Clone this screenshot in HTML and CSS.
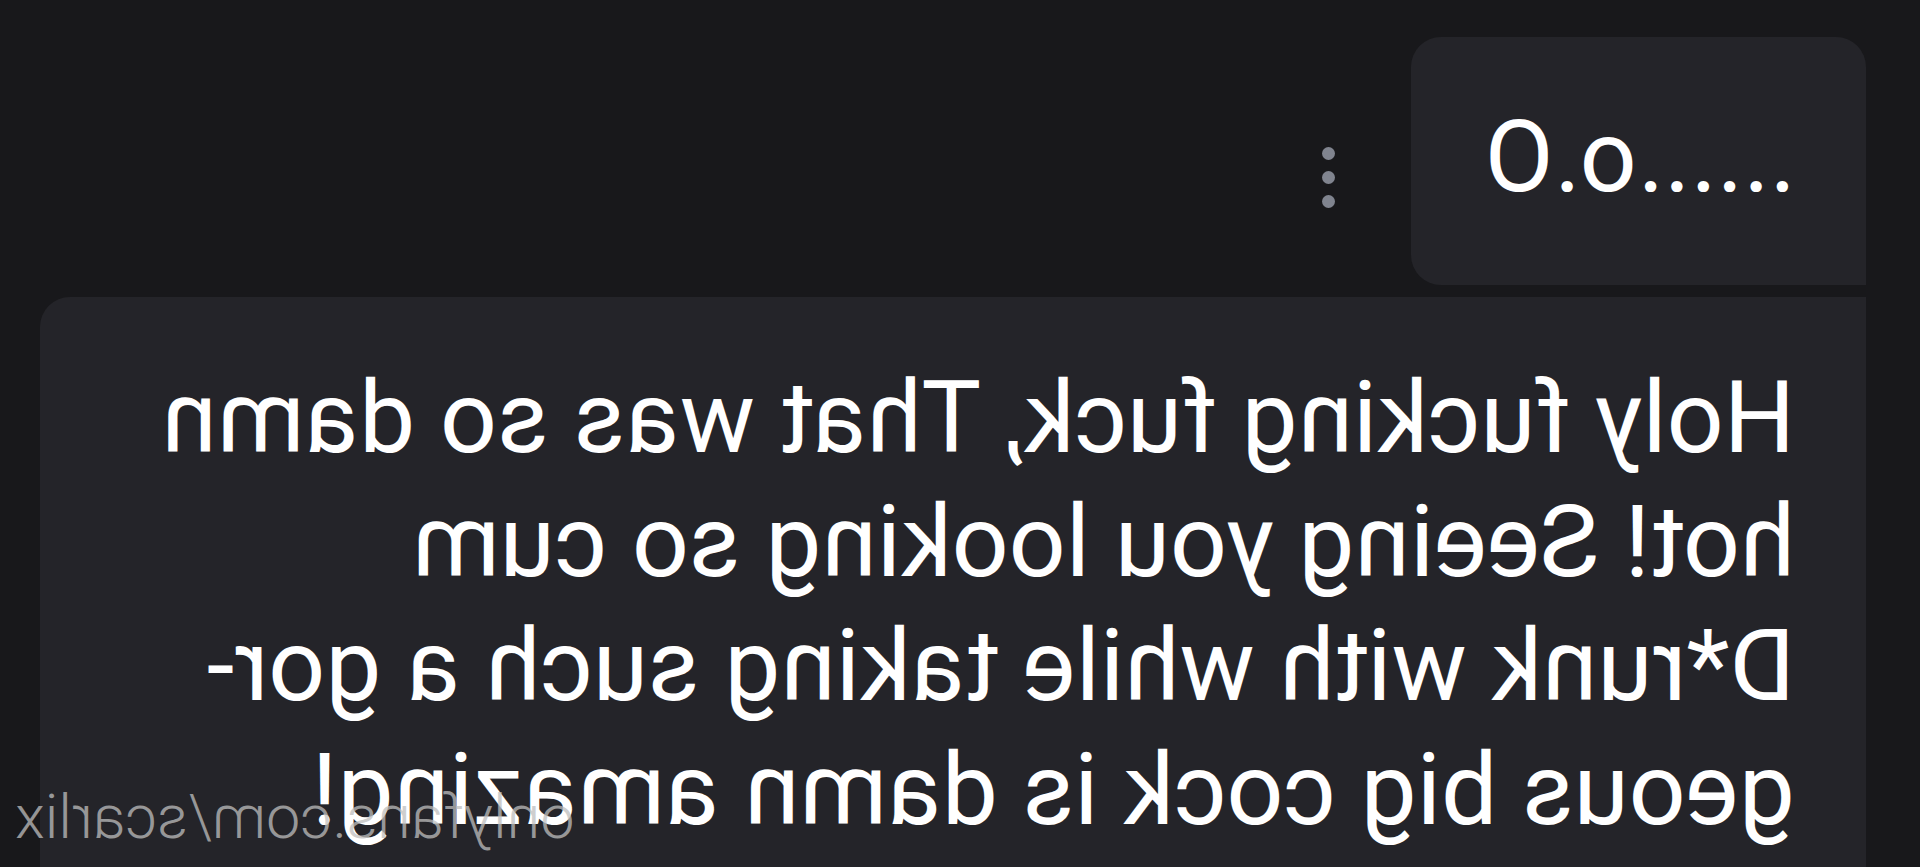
FILE: index.html
```html
<!DOCTYPE html>
<html lang="en">

<head>
    <meta charset="UTF-8" />
    <meta name="viewport" content="width=device-width, initial-scale=1.0" />
    <title>Chat</title>
    <link rel="stylesheet" href="styles.css">
</head>

<body>
    <!-- the whole capture is mirrored, so the thread is laid out normally and flipped -->
    <div class="screen">
        <div class="msg-row">
            <div class="bubble bubble-first">
                <p>......o.O</p>
            </div>
            <div class="more">
                <span></span>
                <span></span>
                <span></span>
            </div>
        </div>

        <div class="bubble bubble-next">
            <p>Holy fucking fuck, That was so damn<br>hot! Seeing you looking so cum<br>D*runk with while taking such a gor-<br>geous big cock is damn amazing!</p>
        </div>

        <div class="watermark">onlyfans.com/scarlix</div>
    </div>
</body>

</html>
```

FILE: styles.css
```css
body {
    margin: 0;
    background-color: #161619;
    font-family: Roboto, 'Noto Sans', sans-serif;
    color: #FFFFFF;
    overflow: hidden;
}

.screen {
    position: relative;
    width: 1920px;
    height: 867px;
    overflow: hidden;
    background-color: #18181b;
    transform: scaleX(-1);
    padding-left: 54px;
    padding-top: 37px;
    box-sizing: border-box;
}

.msg-row {
    display: flex;
    align-items: flex-start;
}

.bubble {
    background-color: #242429;
    box-sizing: border-box;
    padding-left: 71px;
}

.bubble p {
    margin: 0;
    font-size: 100px;
    line-height: 124px;
    white-space: nowrap;
}

.bubble-first {
    width: 455px;
    height: 248px;
    padding-top: 58px;
    border-radius: 30px 30px 30px 0;
}

.bubble-next {
    width: 1826px;
    height: 600px;
    margin-top: 12px;
    padding-top: 59px;
    border-radius: 0 30px 0 0;
}

.more {
    display: flex;
    flex-direction: column;
    gap: 11px;
    margin-left: 76px;
    margin-top: 110px;
}

.more span {
    width: 13px;
    height: 13px;
    border-radius: 50%;
    background-color: #80848f;
}

.watermark {
    position: absolute;
    right: 15px;
    top: 787px;
    font-size: 61px;
    line-height: 61px;
    font-weight: 300;
    color: rgba(190, 190, 190, 0.75);
}
```
